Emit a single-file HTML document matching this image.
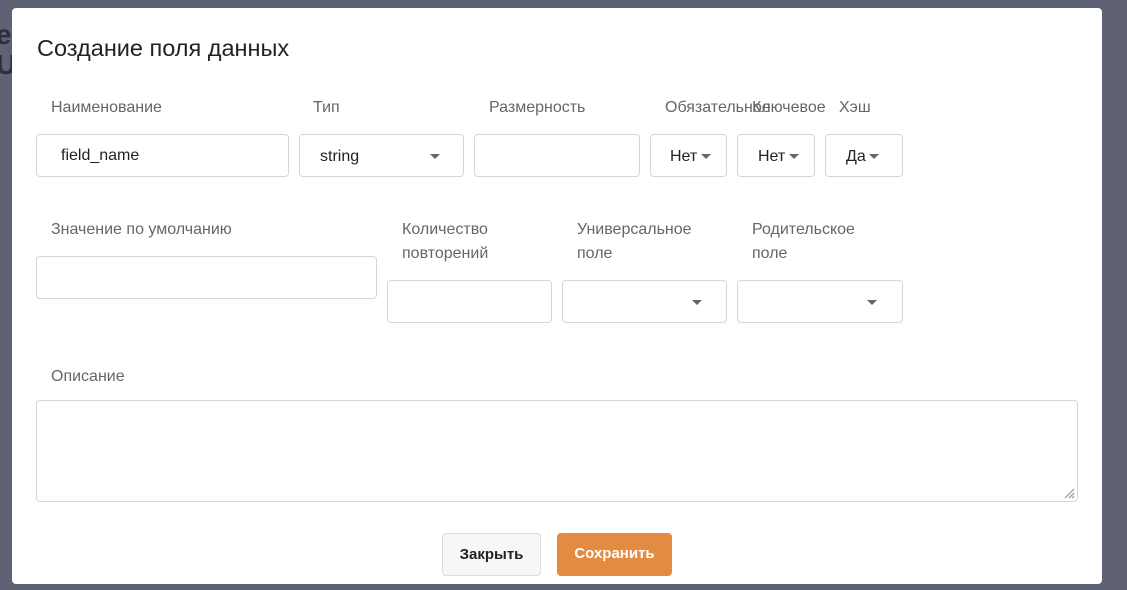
<!DOCTYPE html>
<html><head><meta charset="utf-8"><style>
*{box-sizing:border-box;margin:0;padding:0}
body{width:1127px;height:590px;overflow:hidden;background:#5f6275;font-family:"Liberation Sans","Noto Sans CJK SC",sans-serif;position:relative}
.bgt{position:absolute;left:-4px;top:20px;color:#2e2f3a;font-size:28px;line-height:30px;font-weight:bold}
.modal{position:absolute;left:12px;top:8px;width:1090px;height:576px;background:#fff;border-radius:4px}
.a{position:absolute}
h1{position:absolute;left:25px;top:27px;font-size:23.5px;font-weight:normal;color:#222}
.l{position:absolute;font-size:16px;color:#666;line-height:24px;margin-top:2px}
.i{position:absolute;border:1px solid #d6d6d6;border-radius:4px;background:#fff;font-size:16px;color:#222}
.c{position:absolute;width:0;height:0;border-left:5px solid transparent;border-right:5px solid transparent;border-top:5px solid #666}
.btn{position:absolute;border-radius:4px;font-size:15px;font-weight:bold;text-align:center;line-height:42px}
</style></head><body>
<div class="bgt">ед<br>U</div>
<div class="modal">
<h1>Создание поля данных</h1>
<div class="l" style="left:39px;top:86px">Наименование</div>
<div class="l" style="left:301px;top:86px">Тип</div>
<div class="l" style="left:477px;top:86px">Размерность</div>
<div class="l" style="left:653px;top:86px">Обязательное</div>
<div class="l" style="left:740px;top:86px">Ключевое</div>
<div class="l" style="left:827px;top:86px">Хэш</div>
<div class="i" style="left:24px;top:126px;width:253px;height:43px;padding:12px 0 0 24px">field_name</div>
<div class="i" style="left:287px;top:126px;width:165px;height:43px;padding:13px 0 0 20px">string<span class="c" style="left:130px;top:19px"></span></div>
<div class="i" style="left:462px;top:126px;width:166px;height:43px"></div>
<div class="i" style="left:638px;top:126px;width:77px;height:43px;padding:13px 0 0 19px">Нет<span class="c" style="left:50px;top:19px"></span></div>
<div class="i" style="left:725px;top:126px;width:78px;height:43px;padding:13px 0 0 20px">Нет<span class="c" style="left:51px;top:19px"></span></div>
<div class="i" style="left:813px;top:126px;width:78px;height:43px;padding:13px 0 0 20px">Да<span class="c" style="left:43px;top:19px"></span></div>
<div class="l" style="left:39px;top:208px">Значение по умолчанию</div>
<div class="l" style="left:390px;top:208px">Количество<br>повторений</div>
<div class="l" style="left:565px;top:208px">Универсальное<br>поле</div>
<div class="l" style="left:740px;top:208px">Родительское<br>поле</div>
<div class="i" style="left:24px;top:248px;width:341px;height:43px"></div>
<div class="i" style="left:375px;top:272px;width:165px;height:43px"></div>
<div class="i" style="left:550px;top:272px;width:165px;height:43px"><span class="c" style="left:129px;top:19px"></span></div>
<div class="i" style="left:725px;top:272px;width:166px;height:43px"><span class="c" style="left:129px;top:19px"></span></div>
<div class="l" style="left:39px;top:355px">Описание</div>
<div class="i" style="left:24px;top:392px;width:1042px;height:102px">
<svg class="a" style="right:2px;bottom:2px" width="12" height="12"><path d="M11 2L2 11M11 6L6 11M11 9L9 11" stroke="#888" stroke-width="1"/></svg></div>
<div class="btn" style="left:430px;top:525px;width:99px;height:43px;background:#f6f7f9;border:1px solid #dcdcdc;color:#222">Закрыть</div>
<div class="btn" style="left:545px;top:525px;width:115px;height:43px;background:#e28b41;color:#fff">Сохранить</div>
</div>
</body></html>
